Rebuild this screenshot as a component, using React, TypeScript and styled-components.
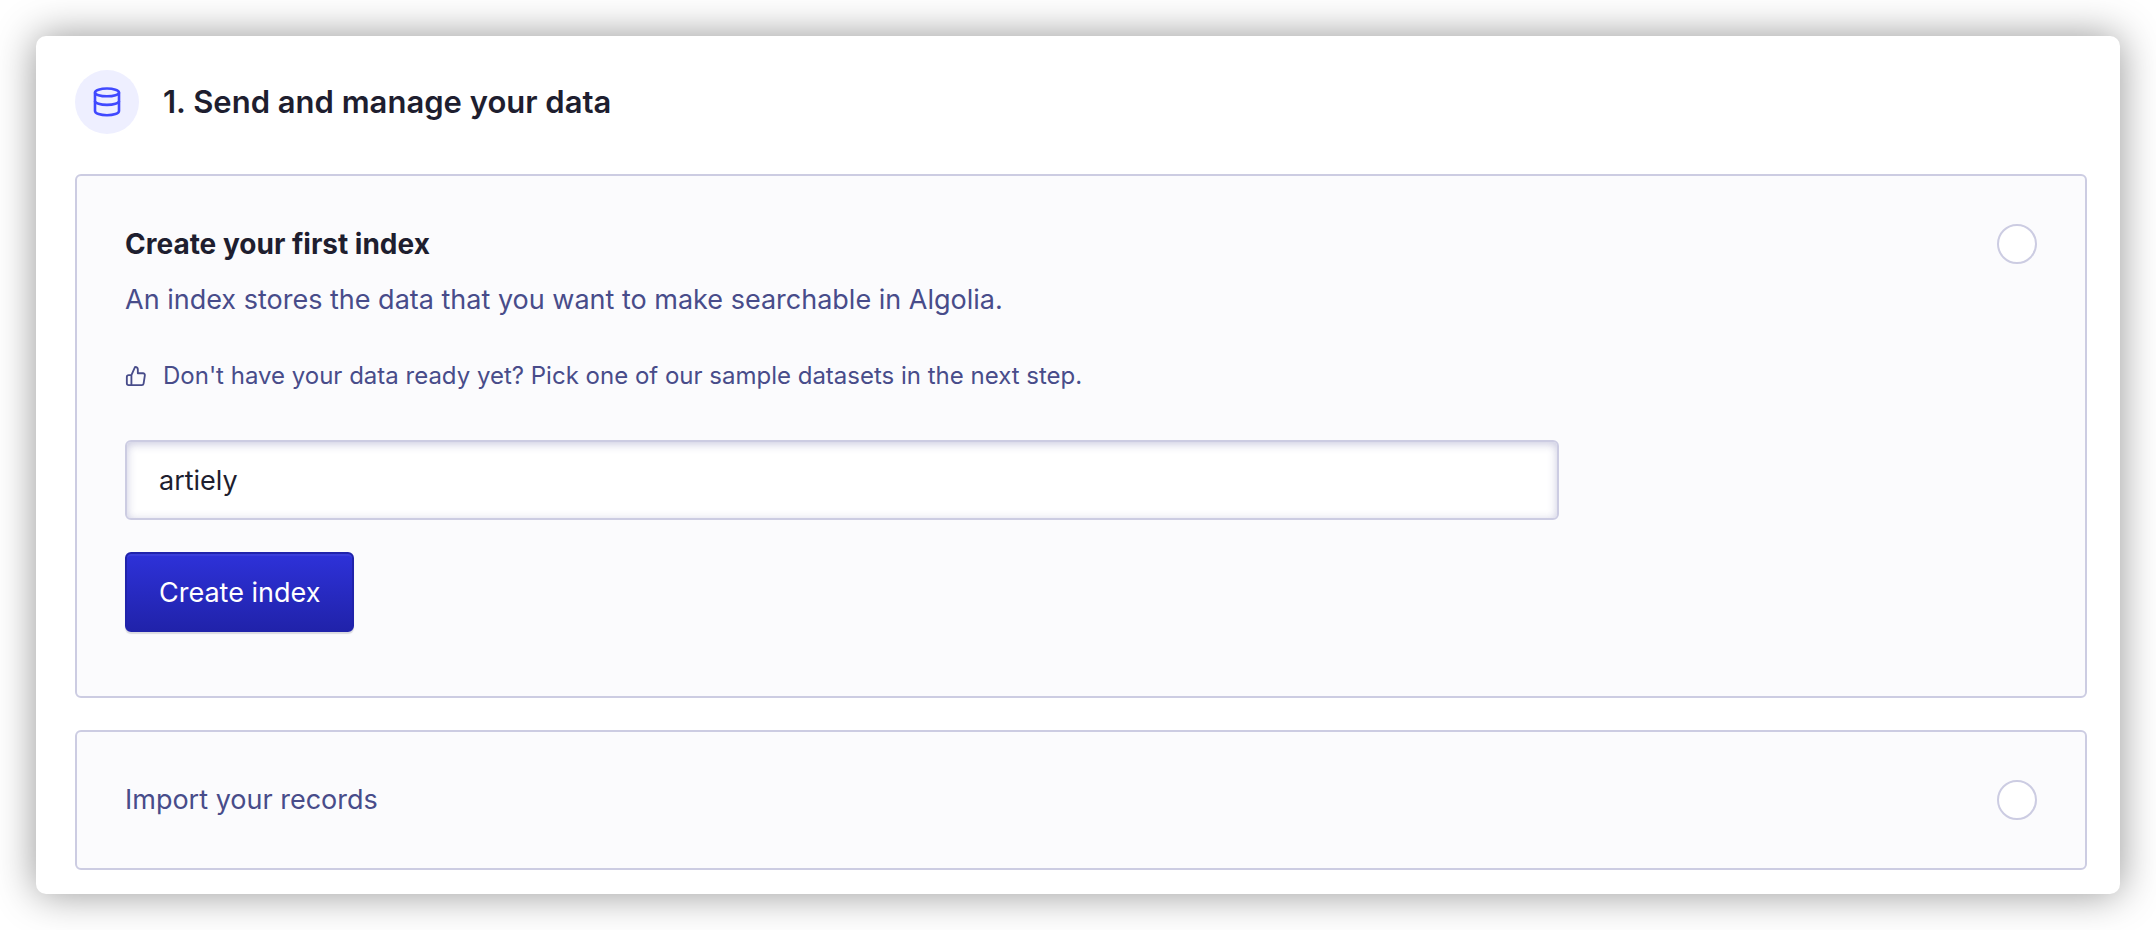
import React, { useState } from "react";
import styled, { createGlobalStyle } from "styled-components";

const GlobalStyle = createGlobalStyle`
  *, *::before, *::after { box-sizing: border-box; }
  body {
    margin: 0;
    background: #ffffff;
    color: #1e1e2f;
    font-family: Inter, "Liberation Sans", sans-serif;
    -webkit-font-smoothing: antialiased;
  }
`;

const Page = styled.main`
  padding: 36px;
`;

const Panel = styled.section`
  padding: 34px 33px 24px 39px;
  border-radius: 10px;
  background: #ffffff;
  box-shadow: 0 0 40px rgba(0, 0, 0, 0.42);
`;

const PanelHeader = styled.header`
  display: flex;
  align-items: center;
  gap: 24px;
  margin-bottom: 40px;
`;

const IconBadge = styled.span`
  display: flex;
  align-items: center;
  justify-content: center;
  width: 64px;
  height: 64px;
  border-radius: 50%;
  background: #eeefff;
  color: #4049ff;
`;

const PanelTitle = styled.h1`
  margin: 0;
  font-size: 31px;
  line-height: 40px;
  font-weight: 600;
`;

const StepList = styled.div`
  display: grid;
  gap: 32px;
`;

const StepCard = styled.article<{ $open?: boolean }>`
  padding: 48px 48px ${(p) => (p.$open ? 64 : 48)}px;
  border: 2px solid #cccce2;
  border-radius: 6px;
  background: #fbfbfd;
`;

const StepHeader = styled.div`
  display: flex;
  align-items: center;
  justify-content: space-between;
`;

const StepTitle = styled.h2<{ $open?: boolean }>`
  margin: 0;
  font-size: ${(p) => (p.$open ? 28 : 27)}px;
  line-height: 40px;
  font-weight: ${(p) => (p.$open ? 700 : 400)};
  color: ${(p) => (p.$open ? "#1e1e2f" : "#484c8a")};
`;

const StepStatus = styled.span`
  width: 40px;
  height: 40px;
  border: 2px solid #cccce2;
  border-radius: 50%;
  background: #ffffff;
`;

const Description = styled.p`
  margin: 16px 0 40px;
  font-size: 27px;
  line-height: 40px;
  color: #484c8a;
`;

const Hint = styled.p`
  display: flex;
  align-items: center;
  gap: 16px;
  margin: 0 0 48px;
  font-size: 24px;
  line-height: 32px;
  color: #484c8a;
`;

const IndexForm = styled.form`
  display: flex;
  flex-direction: column;
  align-items: flex-start;
  gap: 32px;
`;

const IndexInput = styled.input`
  width: 75%;
  height: 80px;
  padding: 0 32px;
  border: 2px solid #cccce2;
  border-radius: 6px;
  outline: none;
  background: #ffffff;
  box-shadow: inset 0 2px 10px rgba(119, 119, 175, 0.4);
  color: #1e1e2f;
  font: inherit;
  font-size: 27px;
`;

const SubmitButton = styled.button`
  height: 80px;
  padding: 0 32px;
  border: 2px solid #2023ab;
  border-radius: 6px;
  background: linear-gradient(#2e32da, #2022a9) border-box;
  box-shadow: inset 0 2px 0 rgba(255, 255, 255, 0.06), 0 2px 1px rgba(35, 38, 59, 0.15);
  color: #ffffff;
  font: inherit;
  font-size: 27px;
  cursor: pointer;
`;

const DatabaseIcon = () => (
  <svg width="32" height="32" viewBox="0 0 32 32" fill="none" stroke="currentColor" strokeWidth="2.6" aria-hidden="true">
    <ellipse cx="16" cy="6.4" rx="12" ry="3.9" />
    <path d="M4 6.4v18.600c0 2.500 5.400 4.300 12 4.300s12-1.800 12-4.300V6.400" />
    <path d="M4 15c0 2.200 5.400 3.900 12 3.900s12-1.700 12-3.900" />
  </svg>
);

const ThumbsUpIcon = () => (
  <svg
    width="22"
    height="22"
    viewBox="0 0 24 24"
    fill="none"
    stroke="currentColor"
    strokeWidth="2"
    strokeLinecap="round"
    strokeLinejoin="round"
    aria-hidden="true"
  >
    <path d="M14 9V5a3 3 0 0 0-3-3l-4 9v11h11.280a2 2 0 0 0 2-1.700l1.380-9a2 2 0 0 0-2-2.300zM7 22H4a2 2 0 0 1-2-2v-7a2 2 0 0 1 2-2h3" />
  </svg>
);

export default function App() {
  const [indexName, setIndexName] = useState("artiely");

  return (
    <>
      <GlobalStyle />
      <Page>
        <Panel>
          <PanelHeader>
            <IconBadge>
              <DatabaseIcon />
            </IconBadge>
            <PanelTitle>1. Send and manage your data</PanelTitle>
          </PanelHeader>
          <StepList>
            <StepCard $open>
              <StepHeader>
                <StepTitle $open>Create your first index</StepTitle>
                <StepStatus />
              </StepHeader>
              <Description>An index stores the data that you want to make searchable in Algolia.</Description>
              <Hint>
                <ThumbsUpIcon />
                Don't have your data ready yet? Pick one of our sample datasets in the next step.
              </Hint>
              <IndexForm onSubmit={(event) => event.preventDefault()}>
                <IndexInput
                  aria-label="Index name"
                  value={indexName}
                  onChange={(event) => setIndexName(event.target.value)}
                />
                <SubmitButton type="submit">Create index</SubmitButton>
              </IndexForm>
            </StepCard>
            <StepCard>
              <StepHeader>
                <StepTitle>Import your records</StepTitle>
                <StepStatus />
              </StepHeader>
            </StepCard>
          </StepList>
        </Panel>
      </Page>
    </>
  );
}
